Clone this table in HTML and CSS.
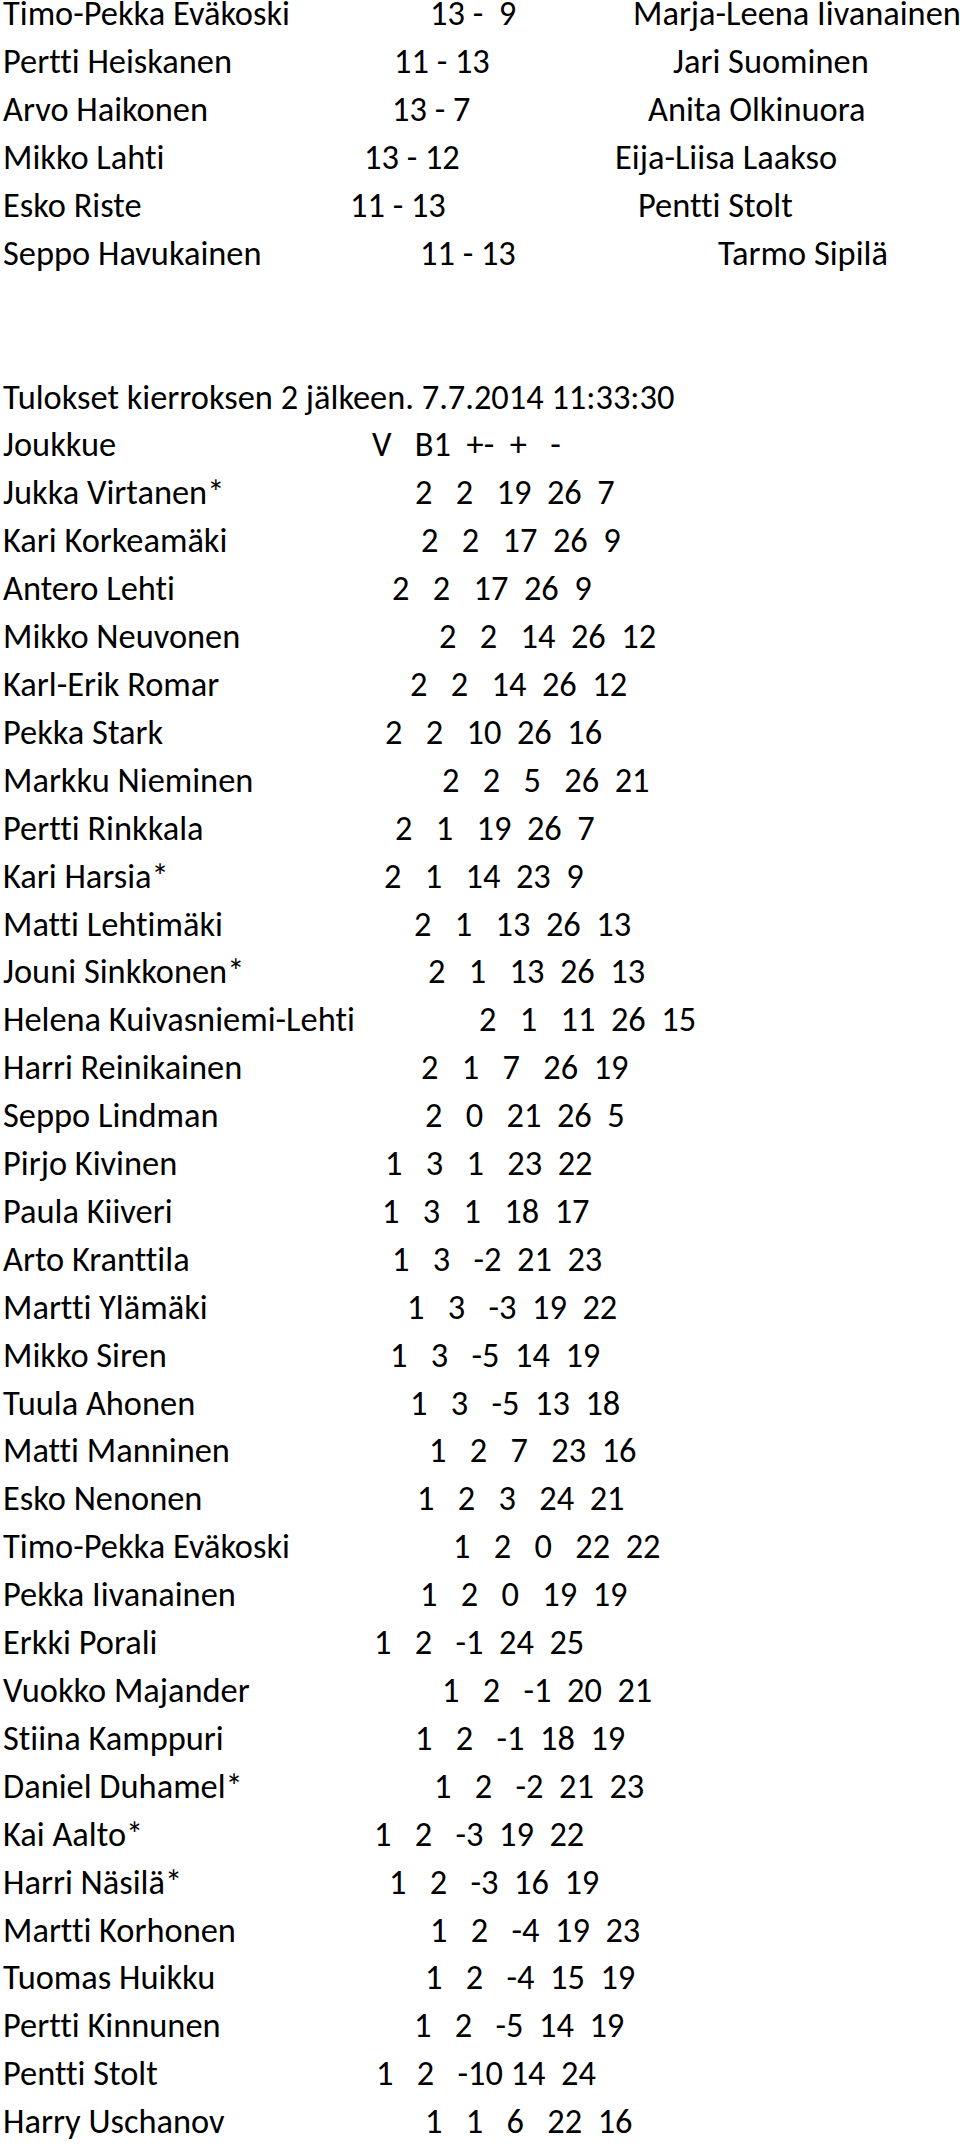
FILE: index.html
```html
<!DOCTYPE html>
<html lang="fi">
<head>
<meta charset="utf-8">
<title>Tulokset</title>
<link rel="stylesheet" href="styles.css">
</head>
<body>
<main class="sheet">
  <section class="matches">
    <div class="match" style="--a:433px; --b:635px"><span>Timo-Pekka Eväkoski</span><span class="score">13 -  9</span><span>Marja-Leena Iivanainen</span></div>
    <div class="match" style="--a:397px; --b:675px"><span>Pertti Heiskanen</span><span class="score">11 - 13</span><span>Jari Suominen</span></div>
    <div class="match" style="--a:395px; --b:650px"><span>Arvo Haikonen</span><span class="score">13 - 7</span><span>Anita Olkinuora</span></div>
    <div class="match" style="--a:367px; --b:617px"><span>Mikko Lahti</span><span class="score">13 - 12</span><span>Eija-Liisa Laakso</span></div>
    <div class="match" style="--a:353px; --b:640px"><span>Esko Riste</span><span class="score">11 - 13</span><span>Pentti Stolt</span></div>
    <div class="match" style="--a:423px; --b:720px"><span>Seppo Havukainen</span><span class="score">11 - 13</span><span>Tarmo Sipilä</span></div>
  </section>

  <section class="standings">
    <div class="title">Tulokset kierroksen 2 jälkeen. 7.7.2014 11:33:30</div>
    <div class="row" style="--x:375px"><span>Joukkue</span><span class="nums">V   B1  +-  +   -</span></div>
    <div class="row" style="--x:418px"><span>Jukka Virtanen*</span><span class="nums">2   2   19  26  7</span></div>
    <div class="row" style="--x:424px"><span>Kari Korkeamäki</span><span class="nums">2   2   17  26  9</span></div>
    <div class="row" style="--x:395px"><span>Antero Lehti</span><span class="nums">2   2   17  26  9</span></div>
    <div class="row" style="--x:442px"><span>Mikko Neuvonen</span><span class="nums">2   2   14  26  12</span></div>
    <div class="row" style="--x:413px"><span>Karl-Erik Romar</span><span class="nums">2   2   14  26  12</span></div>
    <div class="row" style="--x:388px"><span>Pekka Stark</span><span class="nums">2   2   10  26  16</span></div>
    <div class="row" style="--x:445px"><span>Markku Nieminen</span><span class="nums">2   2   5   26  21</span></div>
    <div class="row" style="--x:398px"><span>Pertti Rinkkala</span><span class="nums">2   1   19  26  7</span></div>
    <div class="row" style="--x:387px"><span>Kari Harsia*</span><span class="nums">2   1   14  23  9</span></div>
    <div class="row" style="--x:417px"><span>Matti Lehtimäki</span><span class="nums">2   1   13  26  13</span></div>
    <div class="row" style="--x:431px"><span>Jouni Sinkkonen*</span><span class="nums">2   1   13  26  13</span></div>
    <div class="row" style="--x:482px"><span>Helena Kuivasniemi-Lehti</span><span class="nums">2   1   11  26  15</span></div>
    <div class="row" style="--x:424px"><span>Harri Reinikainen</span><span class="nums">2   1   7   26  19</span></div>
    <div class="row" style="--x:428px"><span>Seppo Lindman</span><span class="nums">2   0   21  26  5</span></div>
    <div class="row" style="--x:388px"><span>Pirjo Kivinen</span><span class="nums">1   3   1   23  22</span></div>
    <div class="row" style="--x:385px"><span>Paula Kiiveri</span><span class="nums">1   3   1   18  17</span></div>
    <div class="row" style="--x:395px"><span>Arto Kranttila</span><span class="nums">1   3   -2  21  23</span></div>
    <div class="row" style="--x:410px"><span>Martti Ylämäki</span><span class="nums">1   3   -3  19  22</span></div>
    <div class="row" style="--x:393px"><span>Mikko Siren</span><span class="nums">1   3   -5  14  19</span></div>
    <div class="row" style="--x:413px"><span>Tuula Ahonen</span><span class="nums">1   3   -5  13  18</span></div>
    <div class="row" style="--x:432px"><span>Matti Manninen</span><span class="nums">1   2   7   23  16</span></div>
    <div class="row" style="--x:420px"><span>Esko Nenonen</span><span class="nums">1   2   3   24  21</span></div>
    <div class="row" style="--x:456px"><span>Timo-Pekka Eväkoski</span><span class="nums">1   2   0   22  22</span></div>
    <div class="row" style="--x:423px"><span>Pekka Iivanainen</span><span class="nums">1   2   0   19  19</span></div>
    <div class="row" style="--x:377px"><span>Erkki Porali</span><span class="nums">1   2   -1  24  25</span></div>
    <div class="row" style="--x:445px"><span>Vuokko Majander</span><span class="nums">1   2   -1  20  21</span></div>
    <div class="row" style="--x:418px"><span>Stiina Kamppuri</span><span class="nums">1   2   -1  18  19</span></div>
    <div class="row" style="--x:437px"><span>Daniel Duhamel*</span><span class="nums">1   2   -2  21  23</span></div>
    <div class="row" style="--x:377px"><span>Kai Aalto*</span><span class="nums">1   2   -3  19  22</span></div>
    <div class="row" style="--x:392px"><span>Harri Näsilä*</span><span class="nums">1   2   -3  16  19</span></div>
    <div class="row" style="--x:433px"><span>Martti Korhonen</span><span class="nums">1   2   -4  19  23</span></div>
    <div class="row" style="--x:428px"><span>Tuomas Huikku</span><span class="nums">1   2   -4  15  19</span></div>
    <div class="row" style="--x:417px"><span>Pertti Kinnunen</span><span class="nums">1   2   -5  14  19</span></div>
    <div class="row" style="--x:379px"><span>Pentti Stolt</span><span class="nums">1   2   -10 14  24</span></div>
    <div class="row" style="--x:428px"><span>Harry Uschanov</span><span class="nums">1   1   6   22  16</span></div>
  </section>
</main>
</body>
</html>
```

FILE: styles.css
```css
html, body {
  margin: 0;
  padding: 0;
  background: #ffffff;
}

.sheet {
  font-family: "Carlito", "Calibri", "Lato", sans-serif;
  font-size: 34.4px;
  line-height: 47.9px;
  color: #000000;
  font-variant-ligatures: none;
  font-feature-settings: "liga" 0, "clig" 0;
  padding-left: 3px;
  margin-top: -9.7px;
}

.match {
  display: grid;
  grid-template-columns: calc(var(--a) - 6px) calc(var(--b) - var(--a) + 1px) auto;
  white-space: pre;
}

.standings {
  margin-top: 95.8px;
}

.title {
  white-space: pre;
}

.row {
  display: grid;
  grid-template-columns: calc(var(--x) - 6px) auto;
  white-space: pre;
}

.nums,
.score {
  white-space: pre;
}
```
